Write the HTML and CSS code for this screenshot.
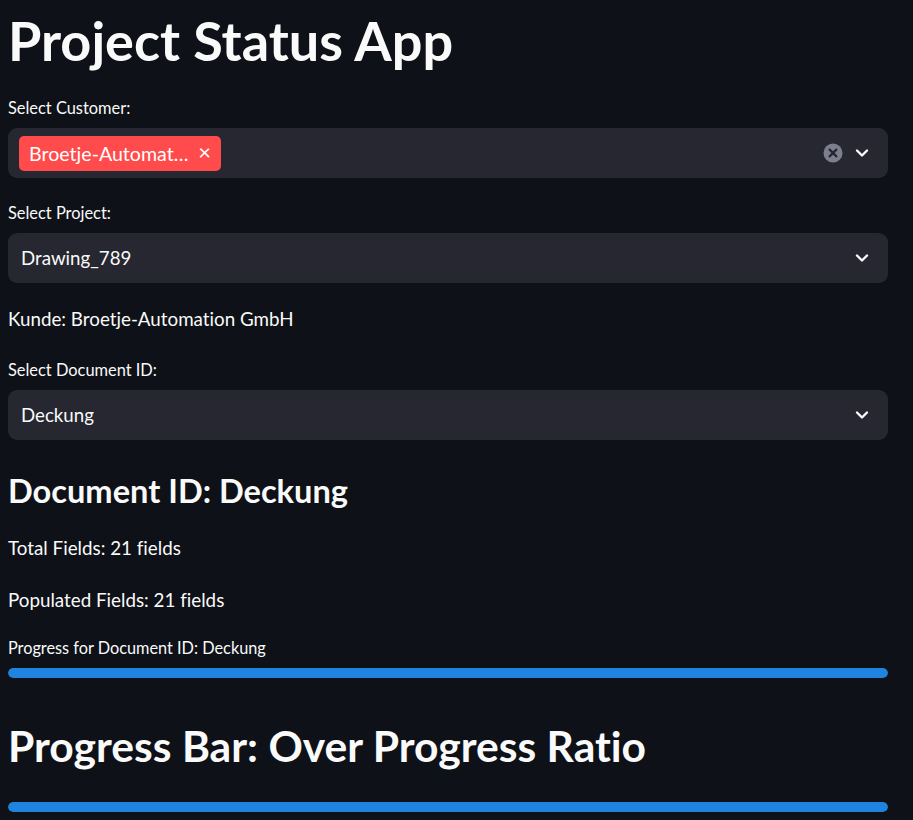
FILE: index.html
```html
<!DOCTYPE html>
<html>
<head>
<meta charset="utf-8">
<link rel="stylesheet" href="styles.css">
</head>
<body>
<main class="app">
  <h1 class="title">Project Status App</h1>

  <div class="field">
    <div class="label">Select Customer:</div>
    <div class="box">
      <div class="tags">
        <span class="tag"><span class="tag-text">Broetje-Automat…</span><span class="tag-x">×</span></span>
      </div>
      <div class="icons">
        <svg class="clear" width="20" height="20" viewBox="0 0 20 20"><circle cx="10" cy="10" r="9.5" fill="#7d7f8c"/><path d="M6.6 6.6L13.4 13.4M13.4 6.6L6.6 13.4" stroke="#262730" stroke-width="2.2" stroke-linecap="round"/></svg>
        <svg class="chev" width="16" height="16" viewBox="0 0 16 16"><path d="M3 5.5L8 10.5L13 5.5" fill="none" stroke="#fafafa" stroke-width="2.4" stroke-linecap="round" stroke-linejoin="round"/></svg>
      </div>
    </div>
  </div>

  <div class="field">
    <div class="label">Select Project:</div>
    <div class="box">
      <div class="value">Drawing_789</div>
      <div class="icons">
        <svg class="chev" width="16" height="16" viewBox="0 0 16 16"><path d="M3 5.5L8 10.5L13 5.5" fill="none" stroke="#fafafa" stroke-width="2.4" stroke-linecap="round" stroke-linejoin="round"/></svg>
      </div>
    </div>
  </div>

  <p class="text">Kunde: Broetje-Automation GmbH</p>

  <div class="field">
    <div class="label">Select Document ID:</div>
    <div class="box">
      <div class="value">Deckung</div>
      <div class="icons">
        <svg class="chev" width="16" height="16" viewBox="0 0 16 16"><path d="M3 5.5L8 10.5L13 5.5" fill="none" stroke="#fafafa" stroke-width="2.4" stroke-linecap="round" stroke-linejoin="round"/></svg>
      </div>
    </div>
  </div>

  <h3 class="sub">Document ID: Deckung</h3>

  <p class="text">Total Fields: 21 fields</p>
  <p class="text">Populated Fields: 21 fields</p>

  <div class="progress">
    <div class="plabel">Progress for Document ID: Deckung</div>
    <div class="bar"><div class="fill" style="width:100%"></div></div>
  </div>

  <h2 class="head">Progress Bar: Over Progress Ratio</h2>

  <div class="progress">
    <div class="bar"><div class="fill" style="width:100%"></div></div>
  </div>
</main>
</body>
</html>
```

FILE: styles.css
```css
html, body {
  margin: 0;
  padding: 0;
  background: #0e1117;
  color: #fafafa;
  font-family: Lato, "Open Sans", sans-serif;
  font-variant-ligatures: none;
}

.app {
  width: 880px;
  margin-left: 8px;
  display: flex;
  flex-direction: column;
  gap: 20px;
}

.title {
  margin: 0;
  height: 73px;
  font-size: 54px;
  font-weight: 700;
  line-height: 82px;
}

.field {
  display: flex;
  flex-direction: column;
}

.label {
  height: 35px;
  font-size: 16.4px;
  line-height: 30px;
}

.box {
  height: 50px;
  background: #262730;
  border-radius: 9px;
  display: flex;
  align-items: center;
  justify-content: space-between;
  box-sizing: border-box;
}

.tags {
  padding-left: 11px;
  display: flex;
}

.tag {
  width: 202px;
  height: 35px;
  box-sizing: border-box;
  background: #ff4b4b;
  border-radius: 5px;
  display: flex;
  align-items: center;
  padding: 0 10px;
  font-size: 19.6px;
  color: #fff;
}

.tag-text {
  flex: 1;
  white-space: nowrap;
}

.tag-x {
  font-size: 22px;
  line-height: 1;
  margin-top: -2px;
}

.value {
  padding-left: 13px;
  font-size: 18.7px;
}

.icons {
  display: flex;
  align-items: center;
  gap: 11px;
  padding-right: 18px;
}

.clear { display: block; }
.chev { display: block; }

.text {
  margin: 0;
  height: 32px;
  line-height: 32px;
  font-size: 18.8px;
}

.sub {
  margin: 0;
  height: 52px;
  font-size: 32.6px;
  font-weight: 700;
  line-height: 62px;
}

.progress {
  display: flex;
  flex-direction: column;
}

.plabel {
  font-size: 16.3px;
  height: 32px;
  line-height: 24px;
}

.bar {
  height: 10px;
  background: #262730;
  border-radius: 5px;
  overflow: hidden;
}

.fill {
  height: 100%;
  background: #1f83e0;
  border-radius: 5px;
}

.head {
  margin: 0;
  height: 84px;
  font-size: 42.6px;
  font-weight: 700;
  line-height: 96px;
}
```
